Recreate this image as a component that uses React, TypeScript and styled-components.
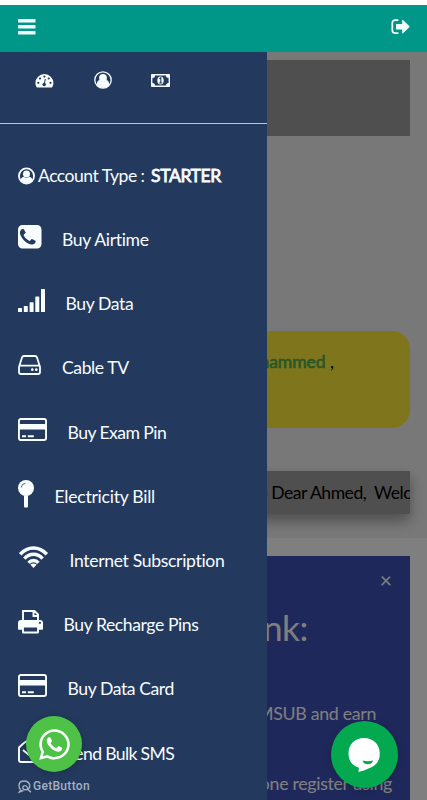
import React from "react";
import styled, { createGlobalStyle } from "styled-components";
import { FaWhatsapp } from "react-icons/fa";

const GlobalStyle = createGlobalStyle`
  * { box-sizing: border-box; }
  body { margin: 0; background: #fff; font-family: Lato, "Open Sans", sans-serif; overflow: hidden; }
  svg { display: block; flex: none; overflow: visible; }
`;

const Screen = styled.div`
  position: relative;
  display: flex;
  flex-direction: column;
  width: 427px;
  height: 800px;
  padding-top: 5px;
  overflow: hidden;
`;
const Header = styled.header`
  display: flex;
  flex: none;
  justify-content: space-between;
  padding: 14px 17px 0 18px;
  height: 47px;
  background: #009688;
  color: #f2fffd;
`;
const Body = styled.div`
  position: relative;
  flex: 1;
  min-height: 0;
  overflow: hidden;
`;
const Page = styled.main`
  display: flex;
  flex-direction: column;
  height: 486px;
  padding: 8px 17px 0;
  overflow: hidden;
  background: #f1f1f1;
`;
const Banner = styled.div`
  flex: none;
  height: 76px;
  background: #9e9e9e;
`;
const Greeting = styled.section`
  flex: none;
  margin-top: 195px;
  height: 97px;
  border-radius: 18px;
  padding: 19px 76px 0 0;
  background: #ffeb3b;
  color: #000;
  font-size: 17.6px;
  line-height: 24px;
  text-align: right;
`;
const Name = styled.b`
  color: #4caf50;
  font-weight: 400;
  letter-spacing: -0.1px;
  -webkit-text-stroke: 0.6px currentColor;
`;
const Ticker = styled.div`
  flex: none;
  margin-top: 43px;
  height: 43px;
  background: #9e9e9e;
  box-shadow: 0 7px 14px rgba(0, 0, 0, 0.35);
`;
const TickerText = styled.div`
  padding-left: 246px;
  overflow: hidden;
  color: #000;
  font-size: 17.6px;
  letter-spacing: -0.5px;
  line-height: 43px;
  white-space: pre;
`;
const LowerPage = styled.section`
  height: 262px;
  padding: 18px 17px 0;
  background: #fff;
`;
const Referral = styled.div`
  display: flex;
  flex-direction: column;
  height: 244px;
  background: #3f51b5;
  color: #fff;
  white-space: nowrap;
`;
const Close = styled.span`
  align-self: flex-end;
  margin: 15px 18px 0 0;
  height: 18px;
  font-size: 21px;
  line-height: 17px;
`;
const Heading = styled.h2`
  margin: 15px 102px 0 0;
  font-size: 35.2px;
  line-height: 46px;
  font-weight: 400;
  letter-spacing: -0.4px;
  text-align: right;
`;
const Copy = styled.p<{ $gap: number; $right: number }>`
  margin: ${(p) => p.$gap}px ${(p) => p.$right}px 0 0;
  font-size: 17.8px;
  line-height: 24px;
  letter-spacing: -0.33px;
  text-align: right;
`;
const Overlay = styled.div`
  position: absolute;
  inset: 0;
  background: rgba(0, 0, 0, 0.5);
`;
const Sidebar = styled.aside`
  position: absolute;
  inset: 0 auto 0 0;
  width: 267px;
  background: #233a5e;
  color: #f8fdff;
`;
const Shortcuts = styled.nav`
  display: flex;
  align-items: center;
  height: 72px;
  padding: 0 0 15px 35px;
  gap: 39.5px;
  border-bottom: 1px solid #b4c8de;
`;
const Account = styled.div`
  display: flex;
  align-items: center;
  height: 24px;
  margin: 39px 0 0 18px;
  font-size: 17.6px;
  letter-spacing: -0.53px;
  white-space: pre;
  svg { margin-right: 3px; }
`;
const AccountTier = styled.b`
  margin-left: 6.5px;
  font-weight: 400;
  letter-spacing: -0.4px;
  -webkit-text-stroke: 0.8px currentColor;
`;
const Menu = styled.nav`
  display: flex;
  flex-direction: column;
  padding: 21px 0 0 18px;
`;
const MenuItem = styled.a<{ $iconWidth: number; $tracking: number }>`
  display: grid;
  flex: none;
  grid-template-columns: ${(p) => p.$iconWidth}px 1fr;
  column-gap: 20.5px;
  align-items: start;
  height: 64.2px;
  font-size: 17.6px;
  letter-spacing: ${(p) => p.$tracking}px;
  line-height: 24px;
  white-space: nowrap;
`;
const MenuLabel = styled.span`
  margin-top: 20px;
`;
const IconSlot = styled.span<{ $top: number }>`
  margin-top: ${(p) => p.$top}px;
`;
const Bubble = styled.button<{ $x: number; $y: number; $size: number; $color: string }>`
  position: absolute;
  left: ${(p) => p.$x}px;
  top: ${(p) => p.$y}px;
  width: ${(p) => p.$size}px;
  height: ${(p) => p.$size}px;
  display: grid;
  place-items: center;
  padding: 0;
  border: 0;
  border-radius: 50%;
  background: ${(p) => p.$color};
  color: #fff;
  box-shadow: 0 1px 7px rgba(0, 0, 0, 0.2);
`;
const Attribution = styled.div`
  position: absolute;
  left: 18px;
  top: 779px;
  display: flex;
  align-items: center;
  gap: 1px;
  height: 14px;
  color: #a5b0c1;
  font: 500 12px/14px Roboto, sans-serif;
  letter-spacing: 0.3px;
`;

const BarsIcon = () => (
  <svg width="18" height="16" fill="currentColor">
    <rect width="17.5" height="3.4" rx=".5" /><rect y="6" width="17.5" height="3.4" rx=".5" /><rect y="12" width="17.5" height="3.4" rx=".5" />
  </svg>
);
const SignOutIcon = () => (
  <svg width="19" height="16" viewBox="0 0 19 16">
    <path d="M7.4 1.2H4.2Q1.3 1.2 1.3 4v7.2q0 2.9 2.9 2.9h3.2" fill="none" stroke="currentColor" strokeWidth="1.7" />
    <path d="M5.6 4.9h5.6V1.4q0-.9.8-.3l6.3 6q.5.6 0 1.1l-6.3 6q-.8.6-.8-.3v-3.5H5.6q-.6 0-.6-.6V5.5q0-.6.6-.6z" fill="currentColor" />
  </svg>
);
const GaugeIcon = () => (
  <svg width="19" height="15" viewBox="0 0 19 15">
    <path d="M1.5 14Q.4 12.2.4 10A9 9 0 0 1 18.4 10Q18.4 12.2 17.3 14q-.3.5-.8.5H2.3q-.5 0-.8-.5z" fill="currentColor" />
    <g fill="#233a5e"><circle cx="3.3" cy="9.8" r="1.1" /><circle cx="5" cy="5.5" r="1.1" /><circle cx="9.4" cy="3.6" r="1.1" /><circle cx="13.7" cy="5.5" r="1.1" /><circle cx="15.5" cy="9.8" r="1.1" /><circle cx="9.2" cy="11.4" r="1.75" /></g>
    <path d="M9.3 11l1-5" stroke="#233a5e" strokeWidth="1" />
  </svg>
);
const UserRingIcon = () => (
  <svg width="18" height="18" viewBox="0 0 18 18">
    <circle cx="9" cy="9" r="8.2" fill="none" stroke="currentColor" strokeWidth="1.3" />
    <circle cx="9" cy="7" r="3.9" fill="currentColor" />
    <path d="M2.600 14q.3-4.500 3-5.100Q9 12.700 12.400 8.900q2.700.6 3 5.100Q12.500 17 9 17t-6.400-3z" fill="currentColor" />
  </svg>
);
const UserCircleIcon = () => (
  <svg width="17" height="17" viewBox="0 -0.5 18 18">
    <circle cx="9" cy="9" r="8" fill="none" stroke="currentColor" strokeWidth="1.9" />
    <circle cx="9" cy="6.9" r="3.7" fill="currentColor" />
    <path d="M2.700 14q.4-3.700 3.200-4.100 3.100 2.400 6.200 0 2.800.4 3.200 4.100Q12.700 17.300 9 17.300T2.700 14z" fill="currentColor" />
  </svg>
);
const MoneyIcon = () => (
  <svg width="19" height="13" viewBox="0 0 19 13">
    <rect width="19" height="13" rx=".8" fill="currentColor" />
    <path d="M4 1.400h11q0 2.500 2.600 2.500v5.200Q15 9.100 15 11.600H4Q4 9.100 1.400 9.100V3.900Q4 3.900 4 1.400z" fill="#233a5e" />
    <ellipse cx="9.5" cy="6.5" rx="3.2" ry="4" fill="currentColor" />
    <path d="M8.300 4.700l1.500-1v5.100M8.200 9h3" stroke="#233a5e" strokeWidth="1.1" fill="none" />
  </svg>
);
const PhoneSquareIcon = () => (
  <svg width="23.5" height="23.5" viewBox="128 128 1536 1536" fill="currentColor">
    <path d="M1280 1193q0-11-2-16-3-8-38.500-29.500t-88.500-49.500l-53-29q-5-3-19-13t-25-15-21-5q-18 0-47 32.500t-57 65.500-44 33q-7 0-16.500-3.500t-15.500-6.500-17-9.500-14-8.500q-99-55-170.500-126.500t-126.500-170.500q-2-3-8.500-14t-9.500-17-6.500-15.500-3.500-16.500q0-13 20.500-33.500t45-38.500 45-39.500 20.500-36.500q0-10-5-21t-15-25-13-19q-3-6-15-28.500t-25-45.500-26.500-47.500-25-40.500-16.500-18-16-2q-48 0-101 22-46 21-80 94.500t-34 130.500q0 16 2.500 34t5 30.500 9 33 10 29.500 12.500 33 11 30q60 164 216.500 320.500t320.500 216.500q6 2 30 11t33 12.500 29.500 10 33 9 30.500 5 34 2.500q57 0 130.500-34t94.500-80q22-53 22-101zm384-777v960q0 119-84.500 203.500t-203.500 84.500h-960q-119 0-203.500-84.500t-84.500-203.500v-960q0-119 84.500-203.500t203.500-84.500h960q119 0 203.500 84.500t84.500 203.500z" />
  </svg>
);
const SignalIcon = () => (
  <svg width="27" height="23" fill="currentColor">
    <rect y="19" width="4" height="4" rx=".6" /><rect x="5.8" y="17" width="4" height="6" rx=".6" /><rect x="11.6" y="13.3" width="4" height="9.7" rx=".6" /><rect x="17.3" y="7.5" width="4" height="15.5" rx=".6" /><rect x="23" width="4" height="23" rx=".6" />
  </svg>
);
const DriveIcon = () => (
  <svg width="23" height="20" viewBox="0 0 23 20">
    <path d="M1 12L4 2.500Q4.500 1 6 1h11q1.500 0 2 1.500L22 12v5q0 2-2 2H3q-2 0-2-2zM1.500 10.700h20" fill="none" stroke="currentColor" strokeWidth="1.8" />
    <circle cx="14.3" cy="14.7" r="1.35" fill="currentColor" /><circle cx="18.3" cy="14.7" r="1.35" fill="currentColor" />
  </svg>
);
const CardIcon = () => (
  <svg width="29" height="23" viewBox="0 0 29 23">
    <rect x=".95" y=".95" width="27.1" height="21.1" rx="2" fill="none" stroke="currentColor" strokeWidth="1.9" />
    <path d="M1 6h27v5.500H1zM4 17.300h4v1.900H4zM9.800 17.300h6v1.900h-6z" fill="currentColor" />
  </svg>
);
const PinIcon = () => (
  <svg width="16" height="28" viewBox="0 0 16 28">
    <circle cx="8" cy="8" r="8" fill="currentColor" />
    <path d="M6 15.500h4v11q0 1-1 1H7q-1 0-1-1z" fill="currentColor" />
    <path d="M3.200 7.500Q3.500 3.800 7.400 3.300" fill="none" stroke="#233a5e" strokeWidth=".8" />
  </svg>
);
const WifiIcon = () => (
  <svg width="31" height="22" viewBox="0 0 31 22">
    <g fill="none" stroke="currentColor" strokeWidth="3.5">
      <path d="M2.200 8.300Q8 2 15.500 2T28.800 8.300" /><path d="M6.400 12.600Q10.300 8.300 15.500 8.300t9.100 4.300" /><path d="M10.600 16.800q2-2.300 4.900-2.300t4.900 2.300" />
    </g>
    <path d="M15.500 22l-3.100-3.200q3.100-2.400 6.200 0z" fill="currentColor" />
  </svg>
);
const PrinterIcon = () => (
  <svg width="25" height="24" viewBox="0 0 25 24">
    <path d="M5 11V1h11.500L20 4.500V11M15.500 1v5H20" fill="none" stroke="currentColor" strokeWidth="1.9" />
    <path fillRule="evenodd" d="M3 10h19q3 0 3 3v6q0 .8-.8.8H21V22q0 1.500-1.500 1.500h-14Q4 23.500 4 22v-2.200H.8Q0 19.800 0 19v-6q0-3 3-3zm2.900 7.500v4.100h13.200v-4.100zM21.900 11.700a1.100 1.100 0 1 0 .1 0z" fill="currentColor" />
  </svg>
);
const EnvelopeIcon = () => (
  <svg width="27" height="25" viewBox="0 0 27 25">
    <path d="M1 9.500Q5 5.200 11 1.500q2.500-1.300 5 0Q22 5.200 26 9.500V22q0 2-2 2H3q-2 0-2-2zM5 12l6 5q2.500 2 5 0l6-5" fill="none" stroke="currentColor" strokeWidth="1.9" />
  </svg>
);
const ChatIcon = () => (
  <svg width="33" height="34" viewBox="0.5 0 33 34">
    <path d="M16.500 0C7.400 0 1 6.400 1 15.400c0 7.200 4 12.600 10.400 14.300L11 34q5.500-1.500 10-3.600 11.300-3.500 11.300-15C32.300 6.400 25.600 0 16.500 0z" fill="#fff" />
    <path d="M15 22.500q5.200 1.500 10.700 0-.8 3.700-5.300 3.700T15 22.500z" fill="#04a84f" />
  </svg>
);
const GetButtonLogo = () => (
  <svg width="14" height="13" viewBox="0 0 14 13">
    <path d="M3 9.700Q1 8.800 1 5.700 1 1 6 1t5.800 4.500q0 4.300-4.500 4.300-2.500 0-2.500-2.200 0-2 2.300-2 1.900 0 2.400 2Q10.300 11 13 12M3 9.700L1.400 12l4-1.500" fill="none" stroke="currentColor" strokeWidth="1.4" />
  </svg>
);

const items = [
  { label: "Buy Airtime", icon: <PhoneSquareIcon />, width: 23.5, top: 16.8, tracking: -0.33 },
  { label: "Buy Data", icon: <SignalIcon />, width: 27, top: 17, tracking: -0.4 },
  { label: "Cable TV", icon: <DriveIcon />, width: 23.5, top: 19, tracking: -0.42 },
  { label: "Buy Exam Pin", icon: <CardIcon />, width: 29, top: 17, tracking: -0.55 },
  { label: "Electricity Bill", icon: <PinIcon />, width: 16, top: 15, tracking: -0.26 },
  { label: "Internet Subscription", icon: <WifiIcon />, width: 31, top: 17, tracking: -0.34 },
  { label: "Buy Recharge Pins", icon: <PrinterIcon />, width: 25, top: 17, tracking: -0.42 },
  { label: "Buy Data Card", icon: <CardIcon />, width: 29, top: 17, tracking: -0.42 },
  { label: "Send Bulk SMS", icon: <EnvelopeIcon />, width: 27, top: 16, tracking: -0.65 },
];

export default function App() {
  return (
    <Screen>
      <GlobalStyle />
      <Header><BarsIcon /><SignOutIcon /></Header>
      <Body>
        <Page>
          <Banner />
          <Greeting><Name>Mohammed</Name> ,</Greeting>
          <Ticker><TickerText>) Dear Ahmed,  Welc</TickerText></Ticker>
        </Page>
        <LowerPage>
          <Referral>
            <Close>×</Close>
            <Heading>Link:</Heading>
            <Copy $gap={51} $right={34}>MSUB and earn</Copy>
            <Copy $gap={46} $right={18}>one register using</Copy>
          </Referral>
        </LowerPage>
        <Overlay />
        <Sidebar>
          <Shortcuts><GaugeIcon /><UserRingIcon /><MoneyIcon /></Shortcuts>
          <Account><UserCircleIcon />Account Type :<AccountTier>STARTER</AccountTier></Account>
          <Menu>
            {items.map((item) => (
              <MenuItem key={item.label} $iconWidth={item.width} $tracking={item.tracking}>
                <IconSlot $top={item.top}>{item.icon}</IconSlot>
                <MenuLabel>{item.label}</MenuLabel>
              </MenuItem>
            ))}
          </Menu>
        </Sidebar>
      </Body>
      <Bubble $x={26} $y={716} $size={56} $color="#4dc247" aria-label="WhatsApp"><FaWhatsapp size={35} /></Bubble>
      <Attribution><GetButtonLogo />GetButton</Attribution>
      <Bubble $x={331} $y={721} $size={67} $color="#04a84f" aria-label="Chat"><ChatIcon /></Bubble>
    </Screen>
  );
}
